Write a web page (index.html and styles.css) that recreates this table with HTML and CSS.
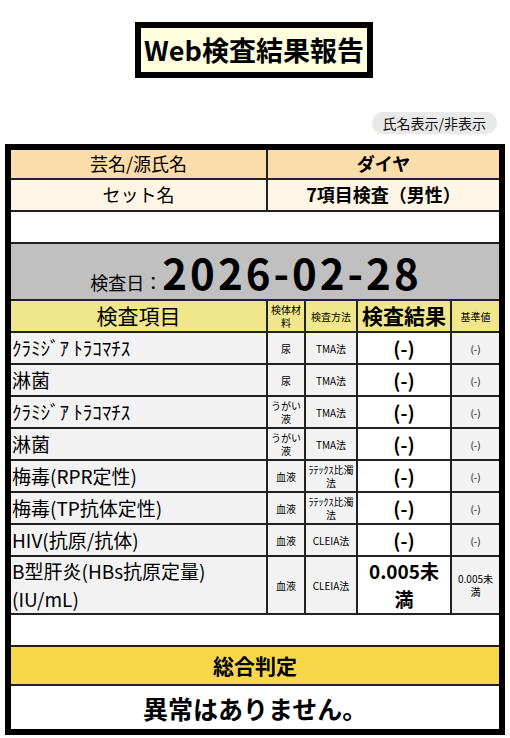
FILE: index.html
```html
<!DOCTYPE html>
<html lang="ja">
<head>
<meta charset="utf-8">
<title>Web検査結果報告</title>
<link rel="stylesheet" href="styles.css">
</head>
<body>
<header class="title-wrap">
  <h1 class="title">Web検査結果報告</h1>
</header>
<div class="toolbar">
  <button class="toggle" type="button">氏名表示/非表示</button>
</div>
<div class="frame">
  <table class="report">
    <colgroup>
      <col class="c-item">
      <col class="c-mat">
      <col class="c-meth">
      <col class="c-res">
      <col class="c-ref">
    </colgroup>
    <tbody>
      <tr class="r-name">
        <td class="lbl">芸名/源氏名</td>
        <td class="val" colspan="4">ダイヤ</td>
      </tr>
      <tr class="r-set">
        <td class="lbl">セット名</td>
        <td class="val" colspan="4">7項目検査（男性）</td>
      </tr>
      <tr class="r-blank"><td colspan="5"></td></tr>
      <tr class="r-date">
        <td colspan="5">
          <div class="date-line"><span class="date-lbl">検査日：</span><span class="date-val">2026-02-28</span></div>
        </td>
      </tr>
      <tr class="r-head">
        <td class="h-item">検査項目</td>
        <td class="h-small">検体材料</td>
        <td class="h-small">検査方法</td>
        <td class="h-res">検査結果</td>
        <td class="h-small">基準値</td>
      </tr>
      <tr class="r-data">
        <td class="item">ｸﾗﾐｼﾞｱ ﾄﾗｺﾏﾁｽ</td>
        <td class="small">尿</td>
        <td class="small meth">TMA法</td>
        <td class="res">(-)</td>
        <td class="small">(-)</td>
      </tr>
      <tr class="r-data">
        <td class="item">淋菌</td>
        <td class="small">尿</td>
        <td class="small meth">TMA法</td>
        <td class="res">(-)</td>
        <td class="small">(-)</td>
      </tr>
      <tr class="r-data">
        <td class="item">ｸﾗﾐｼﾞｱ ﾄﾗｺﾏﾁｽ</td>
        <td class="small">うがい液</td>
        <td class="small meth">TMA法</td>
        <td class="res">(-)</td>
        <td class="small">(-)</td>
      </tr>
      <tr class="r-data">
        <td class="item">淋菌</td>
        <td class="small">うがい液</td>
        <td class="small meth">TMA法</td>
        <td class="res">(-)</td>
        <td class="small">(-)</td>
      </tr>
      <tr class="r-data">
        <td class="item">梅毒(RPR定性)</td>
        <td class="small">血液</td>
        <td class="small meth">ﾗﾃｯｸｽ比濁法</td>
        <td class="res">(-)</td>
        <td class="small">(-)</td>
      </tr>
      <tr class="r-data">
        <td class="item">梅毒(TP抗体定性)</td>
        <td class="small">血液</td>
        <td class="small meth">ﾗﾃｯｸｽ比濁法</td>
        <td class="res">(-)</td>
        <td class="small">(-)</td>
      </tr>
      <tr class="r-data">
        <td class="item">HIV(抗原/抗体)</td>
        <td class="small">血液</td>
        <td class="small meth">CLEIA法</td>
        <td class="res">(-)</td>
        <td class="small">(-)</td>
      </tr>
      <tr class="r-data r-tall">
        <td class="item">B型肝炎(HBs抗原定量)<br>(IU/mL)</td>
        <td class="small">血液</td>
        <td class="small meth">CLEIA法</td>
        <td class="res">0.005未満</td>
        <td class="small ref-wrap">0.005未満</td>
      </tr>
      <tr class="r-blank"><td colspan="5"></td></tr>
      <tr class="r-judge-h"><td colspan="5">総合判定</td></tr>
      <tr class="r-judge"><td colspan="5">異常はありません。</td></tr>
    </tbody>
  </table>
</div>
</body>
</html>
```

FILE: styles.css
```css
* { box-sizing: border-box; }
html, body { margin: 0; padding: 0; background: #fff; }
body {
  font-family: "Noto Sans CJK JP", "Noto Sans", sans-serif;
  color: #000;
  width: 510px;
}
.title-wrap {
  display: flex;
  justify-content: center;
  padding-top: 22px;
  padding-right: 2px;
}
.title {
  margin: 0;
  border: 6px solid #000;
  background: #ffffe0;
  font-size: 27px;
  font-weight: 700;
  line-height: 44px;
  height: 56px;
  padding: 0 3px;
}
.toolbar {
  display: flex;
  justify-content: flex-end;
  padding-right: 13px;
  margin-top: 34px;
}
.toggle {
  font-family: inherit;
  border: none;
  background: #e9e9e9;
  border-radius: 11px;
  font-size: 14px;
  height: 22px;
  line-height: 22px;
  padding: 0 11px;
  color: #111;
}
.frame {
  margin: 10px 5px 0;
  border: 6px solid #000;
  background: #fff;
}
.report {
  width: 100%;
  table-layout: fixed;
  border-collapse: separate;
  border-spacing: 0;
}
.c-item { width: 257px; }
.c-mat { width: 38px; }
.c-meth { width: 52px; }
.c-res { width: 94px; }
.c-ref { width: 47px; }
.report td {
  padding: 0;
  color: #000;
  border-bottom: 2px solid #222;
  border-right: 2px solid #222;
  text-align: center;
  vertical-align: middle;
  line-height: 1.2;
}
.report td:last-child { border-right: none; }
.report tr:last-child td { border-bottom: none; }
.report td[colspan="5"] { border-right: none; }

.r-name { height: 30px; }
.r-name td { background: #fbdcab; font-size: 18px; }
.r-set { height: 32px; }
.r-set td { background: #fdf5e6; font-size: 18px; }
.val { font-weight: 700; }
.r-blank { height: 32px; }
.r-blank td { background: #fff; }

.r-date { height: 57px; }
.r-date td { background: #c0c0c0; vertical-align: bottom; padding-bottom: 5px; }
.date-line {
  display: flex;
  justify-content: center;
  align-items: baseline;
  padding-left: 2px;
}
.date-lbl { font-size: 18px; }
.date-val {
  font-size: 42px;
  font-weight: 700;
  line-height: 1;
  letter-spacing: 3px;
}

.r-head { height: 32px; }
.r-head td { background: #f0e68c; }
.h-item { font-size: 21px; }
.h-res { font-size: 21px; font-weight: 700; }
.h-small { font-size: 10px; padding: 0 2px !important; line-height: 1.3 !important; }

.r-data { height: 32px; }
.r-tall { height: 57px; }
.r-data td { background: #f2f2f2; }
.r-data td.res { background: #fff; font-size: 19px; font-weight: 700; padding: 0 4px; line-height: 28px; }
.item { text-align: left !important; font-size: 19px; padding-left: 1px !important; line-height: 28px !important; }
.small { font-size: 10px; padding: 0 3px !important; line-height: 1.3 !important; }
.meth { padding: 0 1px !important; }
.ref-wrap { padding: 0 5px !important; }

.r-judge-h { height: 39px; }
.r-judge-h td { background: #f8d74b; font-size: 21px; font-weight: 700; }
.r-judge { height: 43px; }
.r-judge td { background: #fff; font-size: 25px; font-weight: 700; }
```
